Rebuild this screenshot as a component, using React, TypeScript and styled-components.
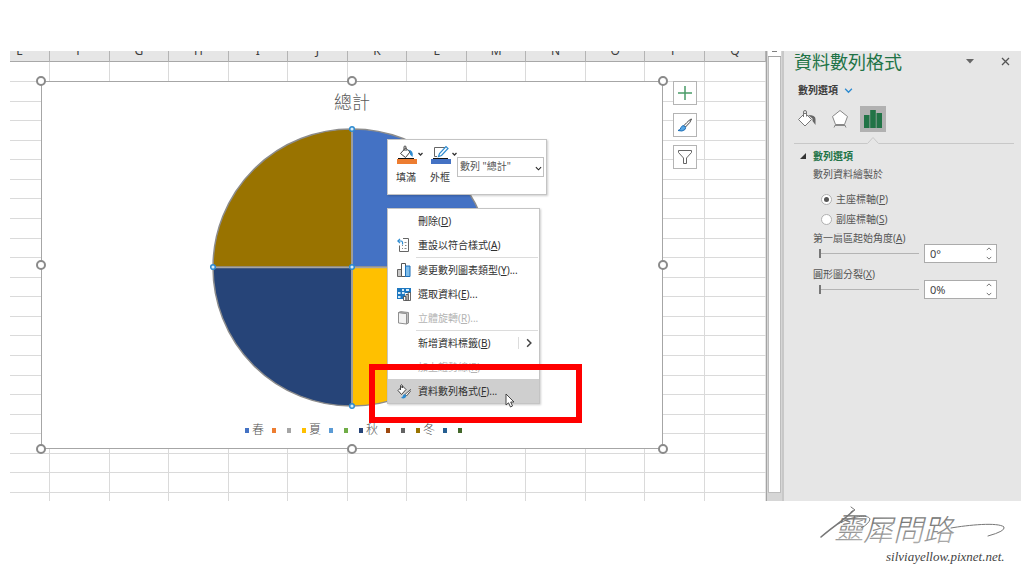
import React, { useState } from "react";
import styled, { createGlobalStyle, css } from "styled-components";

const GlobalStyle = createGlobalStyle`
  *, *::before, *::after { box-sizing: border-box; }
  body { margin: 0; background: #fff; }
  body, button, input, select {
    font-family: "Noto Sans", "Noto Sans CJK TC", sans-serif;
    font-size: 10px;
    color: #3c3c3c;
  }
  button { padding: 0; border: 0; background: none; }
  svg { display: block; flex: none; }
`;

const Page = styled.div`
  min-height: 100vh;
  display: flex;
  flex-direction: column;
  padding: 51px 3px 0 10px;
`;

const Workspace = styled.main`
  flex: 1;
  display: flex;
  min-height: 450px;
`;

/* ---------- worksheet ---------- */

const Sheet = styled.section`
  position: relative;
  flex: 1;
  min-width: 0;
  overflow: hidden;
`;

const Columns = styled.div`
  height: 100%;
  display: grid;
  grid-template-columns: 40px repeat(11, 1fr) 61px;
`;

const Column = styled.div`
  border-right: 1px solid #dadada;
  &:last-child { border-right-color: #e4e4e4; }
`;

const ColumnHeader = styled.div<{ $cut?: boolean }>`
  height: 11px;
  margin-right: -1px;
  overflow: hidden;
  display: flex;
  justify-content: center;
  align-items: flex-end;
  padding: 0 ${(p) => (p.$cut ? 20 : 0)}px 2px 0;
  background: #e6e6e6;
  border-bottom: 1px solid #a8a8a8;
  border-right: 1px solid #b4b4b4;
  font-size: 12px;
  line-height: 16px;
`;

const Rows = styled.div`
  position: absolute;
  inset: 11px 0 0 0;
  display: grid;
  grid-template-rows: 20px repeat(21, 1fr) 8px;
`;

const RowLine = styled.div`
  border-bottom: 1px solid #dadada;
  &:last-child { border-bottom: 0; }
`;

/* ---------- chart ---------- */

const ChartObject = styled.div`
  position: absolute;
  top: 30px;
  left: 31px;
  right: 103px;
`;

const ChartFrame = styled.figure`
  margin: 0;
  padding: 8px 0 10px;
  display: flex;
  flex-direction: column;
  align-items: center;
  background: #fff;
  border: 1px solid #a6a6a6;
`;

const ChartTitle = styled.figcaption`
  font-size: 18px;
  line-height: 24px;
  font-weight: 300;
  color: #595959;
  margin-bottom: 8px;
`;

const Legend = styled.ul`
  list-style: none;
  margin: 10px 0 0;
  padding: 0 0 0 6px;
  height: 16px;
  display: flex;
  align-items: center;
  gap: 8px;
  font-size: 12px;
  line-height: 16px;
  font-weight: 300;
  color: #505050;
`;

const LegendItem = styled.li`
  display: flex;
  align-items: center;
  gap: 3px;
`;

const Swatch = styled.span<{ $color: string }>`
  width: 4px;
  height: 5px;
  background: ${(p) => p.$color};
`;

const Handle = styled.span<{ $x: number; $y: number }>`
  position: absolute;
  left: ${(p) => p.$x}%;
  top: ${(p) => p.$y}%;
  width: 10px;
  height: 10px;
  margin: -5px;
  border: 2px solid #8a8a8a;
  border-radius: 50%;
  background: #fff;
`;

const SideButtons = styled.div`
  position: absolute;
  top: 0;
  left: calc(100% + 10px);
  display: flex;
  flex-direction: column;
  gap: 8px;
`;

const SideButton = styled.button`
  width: 24px;
  height: 24px;
  display: grid;
  place-items: center;
  background: #fff;
  border: 1px solid #b4b4b4;
`;

/* ---------- floating toolbar and menu ---------- */

const floating = css`
  position: absolute;
  left: calc(50% + 35px);
  background: #fff;
  border: 1px solid #c4c4c4;
  box-shadow: 1px 1px 2px rgba(0, 0, 0, 0.2);
`;

const MiniToolbar = styled.div`
  ${floating}
  top: 58px;
  width: 160px;
  height: 56px;
  padding: 5px 2px 0 8px;
  display: flex;
`;

const ToolButton = styled.button`
  width: 34px;
  flex: none;
  display: flex;
  flex-direction: column;
  align-items: flex-start;
  gap: 4px;
  line-height: 16px;
`;

const SelectBox = styled.div`
  position: relative;
  flex: none;
  margin: 12px 0 0 -7px;
  width: 87px;
  height: 20px;
  svg { position: absolute; right: 2px; top: 8px; pointer-events: none; }
`;

const SeriesSelect = styled.select`
  appearance: none;
  width: 100%;
  height: 100%;
  padding: 0 0 3px 2px;
  border: 1px solid #c0c0c0;
  border-radius: 0;
  background: #fff;
  color: #555;
`;

const ContextMenu = styled.div`
  ${floating}
  top: 127px;
  width: 153px;
`;

const MenuItem = styled.button<{ $active?: boolean }>`
  width: 100%;
  height: 24px;
  display: grid;
  grid-template-columns: 30px 1fr 21px;
  align-items: center;
  text-align: left;
  line-height: 16px;
  white-space: nowrap;
  background: ${(p) => (p.$active ? "#cfcfcf" : "transparent")};
  color: #303030;
  &:disabled { color: #b4b4b4; }
`;

const MenuIcon = styled.span`
  padding-left: 9px;
`;

const Submenu = styled.span`
  height: 12px;
  padding-left: 5px;
  display: flex;
  align-items: center;
  border-left: 1px solid #dcdcdc;
`;

const Divider = styled.hr`
  height: 1px;
  margin: 0 1px 0 28px;
  border: 0;
  background: #dcdcdc;
`;

const Cursor = styled.svg`
  position: absolute;
  left: calc(50% + 153px);
  top: 312px;
`;

const Highlight = styled.div`
  position: absolute;
  left: calc(50% + 17px);
  top: 283px;
  width: 213px;
  height: 59px;
  border: 6px solid #f00;
  pointer-events: none;
`;

/* ---------- scroll bar ---------- */

const ScrollBar = styled.div`
  width: 18px;
  flex: none;
  display: flex;
  flex-direction: column;
  background: #d6d6d6;
  border-left: 1px solid #a4a4a4;
  border-right: 2px solid #c8c8c8;
`;

const ScrollCap = styled.div`
  height: 6px;
  padding: 0 4px;
  margin: 0 1px;
  background: #fff;
  border-bottom: 1px solid #a4a4a4;
  &::before { content: ""; display: block; height: 1px; background: #808080; }
`;

const ScrollThumb = styled.div`
  flex: 1;
  margin: 0 1px 8px;
  background: #fff;
  border: 1px solid #bdbdbd;
  border-top: 0;
`;

/* ---------- format panel ---------- */

const Panel = styled.aside`
  width: 237px;
  flex: none;
  padding: 0 7px 0 10px;
  background: #e6e6e6;
`;

const PanelHeader = styled.header`
  display: flex;
  align-items: center;
  height: 21px;
  gap: 27px;
  padding-right: 4px;
`;

const PanelTitle = styled.h1`
  flex: 1;
  margin: 0;
  font-size: 18px;
  line-height: 20px;
  font-weight: 400;
  color: #217346;
`;

const OptionsToggle = styled.button`
  display: flex;
  align-items: center;
  gap: 6px;
  margin: 10px 0 0 4px;
  font-weight: 700;
  line-height: 16px;
`;

const IconTabs = styled.div`
  display: flex;
  gap: 7px;
  margin-top: 8px;
`;

const IconTab = styled.button<{ $active?: boolean }>`
  width: 26px;
  height: 26px;
  display: grid;
  place-items: center;
  background: ${(p) => (p.$active ? "#b1b1b1" : "transparent")};
`;

const TabRule = styled.div`
  height: 12px;
  display: flex;
  align-items: flex-end;
  &::before, &::after { content: ""; height: 1px; background: #c8c8c8; }
  &::before { width: 73px; }
  &::after { flex: 1; }
`;

const SectionToggle = styled.button`
  display: flex;
  align-items: center;
  gap: 7px;
  margin: 4px 0 0 6px;
  font-weight: 700;
  line-height: 16px;
  color: #217346;
`;

const Section = styled.div`
  padding-left: 19px;
  color: #555;
`;

const Group = styled.fieldset`
  margin: 2px 0 1px;
  padding: 0;
  border: 0;
  line-height: 16px;
`;

const GroupTitle = styled.legend`
  padding: 0;
  margin-bottom: 7px;
`;

const RadioLabel = styled.label`
  display: flex;
  align-items: center;
  gap: 4px;
  height: 20px;
  padding-left: 8px;
`;

const Radio = styled.input`
  appearance: none;
  width: 11px;
  height: 11px;
  margin: 0;
  display: grid;
  place-items: center;
  border: 1px solid #b0b0b0;
  border-radius: 50%;
  background: #fff;
  &:checked::before {
    content: "";
    width: 5px;
    height: 5px;
    border-radius: 50%;
    background: #555;
  }
`;

const Field = styled.div`
  height: 36px;
  line-height: 16px;
`;

const FieldLabel = styled.label`
  display: block;
  height: 14px;
`;

const FieldRow = styled.div`
  display: flex;
  align-items: center;
  gap: 5px;
  padding-left: 6px;
`;

const Slider = styled.input`
  appearance: none;
  width: 100px;
  height: 16px;
  margin: 0;
  background: linear-gradient(#b4b4b4, #b4b4b4) center / 100% 1px no-repeat;
  &::-webkit-slider-thumb {
    appearance: none;
    width: 2px;
    height: 9px;
    background: #777;
  }
`;

const SpinBox = styled.div`
  width: 73px;
  height: 19px;
  display: flex;
  background: #fff;
  border: 1px solid #ababab;
`;

const SpinInput = styled.input`
  flex: 1;
  min-width: 0;
  padding: 0 0 0 5px;
  border: 0;
  background: none;
  font-size: 11px;
  color: #444;
`;

const SpinButtons = styled.div`
  width: 14px;
  display: grid;
`;

const SpinButton = styled.button`
  display: grid;
  place-items: center;
`;

/* ---------- footer ---------- */

const Footer = styled.footer`
  height: 75px;
  display: flex;
  justify-content: flex-end;
  padding-right: 7px;
`;

/* ---------- drawings ---------- */

const Chevron = ({ w = 6, color = "#444", dir = "down" }: { w?: number; color?: string; dir?: "down" | "up" | "right" }) => {
  const turn = { down: 0, up: 180, right: -90 }[dir];
  return (
    <svg width={w} height={w} viewBox="0 0 8 8">
      <path d="M1 2.5 4 5.5 7 2.5" fill="none" stroke={color} strokeWidth="1.2" transform={`rotate(${turn} 4 4)`} />
    </svg>
  );
};

const FillIcon = () => (
  <svg width="28" height="20" viewBox="0 0 28 20">
    <path d="M9.5 3 4.5 8.5 9.5 12.5 14 7Z" fill="#fff" stroke="#444" />
    <path d="M8 6V2Q8 1 9 1T10 2V6" fill="none" stroke="#444" />
    <path d="M12 4.5Q18 5 16.5 12L14 9.5V6.5Z" fill="#2e8bd0" />
    <path d="M2 13.5H18" stroke="#111" />
    <path d="M1 14H21V19H1Z" fill="#ed7d31" />
    <path d="M22.5 8 24.5 10 26.5 8" fill="none" stroke="#333" strokeWidth="1.3" />
  </svg>
);

const OutlineIcon = () => (
  <svg width="28" height="20" viewBox="0 0 28 20">
    <path d="M15 2.5H4.5V11.5H7" fill="none" stroke="#666" />
    <path d="M8.5 11.5 9.5 8.5 16 1.5 18 3.5 11.5 10.5Z" fill="#fff" stroke="#2e8bd0" strokeWidth="1.2" />
    <path d="M3 13.5H18" stroke="#111" />
    <path d="M1 14H21V19H1Z" fill="#4472c4" />
    <path d="M22.5 8 24.5 10 26.5 8" fill="none" stroke="#333" strokeWidth="1.3" />
  </svg>
);

const menuIcons: Record<string, React.ReactNode> = {
  reset: (
    <svg width="14" height="14" viewBox="0 0 14 14" fill="none">
      <path d="M6 .5H11.5V13.5H2.5V7.5" stroke="#666" />
      <path d="M7.5 4.5H9.5M5 7.5H6M8 7.5H9.5M5 10.5H6M7.5 10.5H9.5" stroke="#888" />
      <path d="M1 3H4Q6 3 5.5 6.5M3 .8 .8 3 3 5.2" stroke="#2e8bd0" strokeWidth="1.2" />
    </svg>
  ),
  chartType: (
    <svg width="14" height="14" viewBox="0 0 14 14">
      <path d="M.5 6.5H4.5V13.5H.5Z" fill="#c8c8c8" stroke="#666" />
      <path d="M4.5 .5H8.5V13.5H4.5Z" fill="#fff" stroke="#555" />
      <path d="M8.5 3H13V13.5H8.5Z" fill="#7fbdea" stroke="#1e6fb8" />
    </svg>
  ),
  selectData: (
    <svg width="14" height="14" viewBox="0 0 14 14">
      <path d="M0 1H14V6H8V12H0Z" fill="#1e78c0" />
      <path d="M1 5H3.500V7H1ZM5 2H7V4H5ZM5 5H7.500V7H5ZM9 2H12V4H9ZM1 9H3.500V11H1Z" fill="#d5ebfa" />
      <path d="M6.5 9.5H9V13.5H6.5ZM9 7.5H11.2V13.5H9ZM11.2 5.5H13.5V13.5H11.2Z" fill="#fff" stroke="#444" strokeWidth=".8" />
    </svg>
  ),
  rotate: (
    <svg width="14" height="14" viewBox="0 0 14 14" stroke="#909090">
      <path d="M1.5 1.5 9.5 2.5V13L1.5 12Z" fill="#f2f2f2" />
      <path d="M1.5 1.5 3.5 .6 11.5 1.5V12L9.5 13V2.5Z" fill="#c0c0c0" />
    </svg>
  ),
  format: (
    <svg width="14" height="15" viewBox="0 0 14 15">
      <path d="M5.5 2 1 6.5 4.5 10.5 9 5.5Z" fill="#fff" stroke="#444" />
      <path d="M3.5 6V1.5Q4.5-.2 5.5 1.5V4" fill="none" stroke="#444" />
      <path d="M13.5 5.5 8 10.5 9.5 12 14 6.5Z" fill="#fff" stroke="#444" strokeWidth=".9" />
      <path d="M4 13.8Q6 13 6 11.5 7.5 9.5 9 11 10 12.5 8 14 6 15 4 13.8Z" fill="#2e8bd0" />
    </svg>
  ),
};

const Pie = () => (
  <svg width="290" height="290" viewBox="0 0 290 290" role="img" aria-label="總計">
    <g stroke="#8c8c8c" strokeWidth="1.5">
      <path d="M145 145V7A138.5 138.5 0 0 1 284 145Z" fill="#4472c4" />
      <path d="M145 145H284A138.5 138.5 0 0 1 145 284Z" fill="#ffc000" />
      <path d="M145 145V284A138.5 138.5 0 0 1 6 145Z" fill="#264478" />
      <path d="M145 145H6A138.5 138.5 0 0 1 145 7Z" fill="#997300" />
    </g>
    <path d="M145 7V284M6 145.5H284" stroke="#a5a5a5" strokeWidth="1.5" />
    <g fill="#d8ecfa" stroke="#2e8bd0" strokeWidth="1.5">
      {[[145, 7], [6, 145], [145, 145], [145, 284], [284, 145]].map(([x, y]) => (
        <circle key={`${x}-${y}`} cx={x} cy={y} r="2.3" />
      ))}
    </g>
  </svg>
);

const Signature = () => (
  <svg width="200" height="72" viewBox="0 0 200 72" role="img" aria-label="靈犀問路">
    <defs>
      <linearGradient id="ink" x1="0" y1="0" x2="0.3" y2="1">
        <stop offset="0" stopColor="#555" />
        <stop offset="0.5" stopColor="#808080" />
        <stop offset="1" stopColor="#b0b0b0" />
      </linearGradient>
    </defs>
    <g fontFamily="'Noto Sans CJK TC', sans-serif" fontWeight="300" fontStyle="italic" fill="url(#ink)">
      <text x="20" y="38" fontSize="30">靈</text>
      <text x="49" y="40" fontSize="30">犀</text>
      <text x="79" y="40" fontSize="30">問</text>
      <text x="109" y="40" fontSize="30">路</text>
    </g>
    <g fill="none" stroke="#777" strokeLinecap="round">
      <path d="M7 36C18 26 29 20 39 10" strokeWidth="1.6" />
      <path d="M37 6 41 9 37 11M24 23C38 15 54 13 56 18Q55 23 47 27" />
      <path d="M137 27C154 24 184 21 190 26Q192 30 174 35" />
    </g>
    <text x="72" y="60" fontFamily="'Liberation Serif', serif" fontStyle="italic" fontSize="13" fill="#444">
      silviayellow.pixnet.net.
    </text>
  </svg>
);

/* ---------- content ---------- */

const letters = ["E", "F", "G", "H", "I", "J", "K", "L", "M", "N", "O", "P", "Q"];

const legend: [string, string][] = [
  ["#4472c4", "春"], ["#ed7d31", ""], ["#a5a5a5", ""],
  ["#ffc000", "夏"], ["#5b9bd5", ""], ["#70ad47", ""],
  ["#264478", "秋"], ["#9e480e", ""], ["#636363", ""],
  ["#997300", "冬"], ["#255e91", ""], ["#43682b", ""],
];

const handles = [[0, 0], [50, 0], [100, 0], [0, 50], [100, 50], [0, 100], [50, 100], [100, 100]];

type Entry = { text: string; keyName: string; more?: boolean; icon?: string; disabled?: boolean; submenu?: boolean; active?: boolean };

const menu: Entry[][] = [
  [
    { text: "刪除", keyName: "D" },
    { text: "重設以符合樣式", keyName: "A", icon: "reset" },
  ],
  [
    { text: "變更數列圖表類型", keyName: "Y", more: true, icon: "chartType" },
    { text: "選取資料", keyName: "E", more: true, icon: "selectData" },
    { text: "立體旋轉", keyName: "R", more: true, icon: "rotate", disabled: true },
  ],
  [
    { text: "新增資料標籤", keyName: "B", submenu: true },
    { text: "加上趨勢線", keyName: "R", disabled: true },
    { text: "資料數列格式", keyName: "F", more: true, icon: "format", active: true },
  ],
];

const Mnemonic = ({ text, k, more }: { text: string; k: string; more?: boolean }) => (
  <span>{text}(<u>{k}</u>){more && "..."}</span>
);

const SliderField = ({ id, text, k, unit }: { id: string; text: string; k: string; unit: string }) => {
  const [value, setValue] = useState(0);
  return (
    <Field>
      <FieldLabel htmlFor={id}><Mnemonic text={text} k={k} /></FieldLabel>
      <FieldRow>
        <Slider id={id} type="range" min={0} max={360} value={value} onChange={(e) => setValue(+e.target.value)} />
        <SpinBox>
          <SpinInput aria-label={text} value={`${value}${unit}`} onChange={(e) => setValue(parseInt(e.target.value) || 0)} />
          <SpinButtons>
            <SpinButton aria-label="增加" onClick={() => setValue(value + 1)}><Chevron dir="up" color="#666" /></SpinButton>
            <SpinButton aria-label="減少" onClick={() => setValue(Math.max(0, value - 1))}><Chevron color="#666" /></SpinButton>
          </SpinButtons>
        </SpinBox>
      </FieldRow>
    </Field>
  );
};

export default function App() {
  return (
    <Page lang="zh-Hant">
      <GlobalStyle />
      <Workspace>
        <Sheet>
          <Columns>
            {letters.map((l, i) => (
              <Column key={l}><ColumnHeader $cut={i === 0}>{l}</ColumnHeader></Column>
            ))}
          </Columns>
          <Rows>
            {Array.from({ length: 23 }, (_, i) => <RowLine key={i} />)}
          </Rows>

          <ChartObject>
            <ChartFrame>
              <ChartTitle>總計</ChartTitle>
              <Pie />
              <Legend>
                {legend.map(([color, name]) => (
                  <LegendItem key={color}><Swatch $color={color} /><span>{name}</span></LegendItem>
                ))}
              </Legend>
            </ChartFrame>
            {handles.map(([x, y]) => <Handle key={`${x}-${y}`} $x={x} $y={y} />)}

            <SideButtons>
              <SideButton aria-label="圖表項目">
                <svg width="16" height="16" viewBox="0 0 16 16"><path d="M8 1V15M1 8H15" stroke="#4a9c68" strokeWidth="1.5" /></svg>
              </SideButton>
              <SideButton aria-label="圖表樣式">
                <svg width="16" height="16" viewBox="0 0 16 16">
                  <path d="M14.5 2Q13 2 7 8.5L8.5 10Q14 5 14.5 2Z" fill="#fff" stroke="#444" />
                  <path d="M1 13.5Q3.5 13 4 10.5 5.5 7.5 7.5 9 9.5 10.5 8 12.5 5.5 15 1 13.5Z" fill="#5aa9e6" stroke="#1e6fb8" />
                </svg>
              </SideButton>
              <SideButton aria-label="圖表篩選">
                <svg width="16" height="16" viewBox="0 0 16 16"><path d="M1.5 1.5H14.5V3.5L9.5 9V14.5H6.5V9L1.5 3.5Z" fill="#fff" stroke="#666" /></svg>
              </SideButton>
            </SideButtons>

            <MiniToolbar>
              <ToolButton><FillIcon />填滿</ToolButton>
              <ToolButton><OutlineIcon />外框</ToolButton>
              <SelectBox>
                <SeriesSelect aria-label="圖表項目"><option>數列 "總計"</option></SeriesSelect>
                <Chevron w={7} color="#222" />
              </SelectBox>
            </MiniToolbar>

            <ContextMenu role="menu">
              {menu.map((group, g) => (
                <React.Fragment key={g}>
                  {g > 0 && <Divider />}
                  {group.map((m) => (
                    <MenuItem key={m.text} role="menuitem" disabled={m.disabled} $active={m.active}>
                      <MenuIcon>{m.icon && menuIcons[m.icon]}</MenuIcon>
                      <Mnemonic text={m.text} k={m.keyName} more={m.more} />
                      {m.submenu && <Submenu><Chevron dir="right" w={10} /></Submenu>}
                    </MenuItem>
                  ))}
                </React.Fragment>
              ))}
            </ContextMenu>
            <Highlight />
            <Cursor width="10" height="15" viewBox="0 0 10 15">
              <path d="M1 1V12L3.5 9.8 5.5 14 7.5 13 5.7 9H9Z" fill="#fff" stroke="#333" strokeWidth=".9" />
            </Cursor>
          </ChartObject>
        </Sheet>

        <ScrollBar>
          <ScrollCap />
          <ScrollThumb />
        </ScrollBar>

        <Panel>
          <PanelHeader>
            <PanelTitle>資料數列格式</PanelTitle>
            <button aria-label="工作窗格選項">
              <svg width="8" height="5" viewBox="0 0 8 5"><path d="M0 0H8L4 4.5Z" fill="#666" /></svg>
            </button>
            <button aria-label="關閉">
              <svg width="9" height="9" viewBox="0 0 9 9"><path d="M1 1 8 8M8 1 1 8" stroke="#555" strokeWidth="1.3" /></svg>
            </button>
          </PanelHeader>
          <OptionsToggle>數列選項<Chevron w={9} color="#2e8bd0" /></OptionsToggle>
          <IconTabs>
            <IconTab aria-label="填滿與線條">
              <svg width="20" height="20" viewBox="0 0 20 20">
                <path d="M8 4 1.5 10.5 8 17 14.5 10.5Z" fill="#fff" stroke="#777" />
                <path d="M6.5 8V3Q6.5 1.5 8 1.5T9.5 3V7.5" fill="none" stroke="#777" />
                <path d="M11 6Q18.5 6 18.5 10V16L15.5 12V9.5Z" fill="#666" />
              </svg>
            </IconTab>
            <IconTab aria-label="效果">
              <svg width="18" height="20" viewBox="0 0 18 20">
                <path d="M9 1.5 16.5 7.5 13.5 15.5H4.5L1.5 7.5Z" fill="#fff" stroke="#888" />
                <path d="M4 16.5H14M4.5 15.5 3 18.5M13.5 15.5 15 18.5" fill="none" stroke="#888" />
              </svg>
            </IconTab>
            <IconTab aria-label="數列選項" $active>
              <svg width="18" height="18" viewBox="0 0 18 18">
                <path d="M0 5H5.5V18H0ZM6.2 0H11.8V18H6.2ZM12.5 3H18V18H12.5Z" fill="#217346" />
              </svg>
            </IconTab>
          </IconTabs>
          <TabRule>
            <svg width="12" height="8" viewBox="0 0 12 8"><path d="M0 7.5H.5L6 1.5 11.5 7.5H12" fill="none" stroke="#c8c8c8" /></svg>
          </TabRule>
          <SectionToggle>
            <svg width="6" height="6" viewBox="0 0 6 6"><path d="M6 0V6H0Z" fill="#333" /></svg>
            數列選項
          </SectionToggle>
          <Section>
            <Group>
              <GroupTitle>數列資料繪製於</GroupTitle>
              <RadioLabel><Radio type="radio" name="axis" defaultChecked /><Mnemonic text="主座標軸" k="P" /></RadioLabel>
              <RadioLabel><Radio type="radio" name="axis" /><Mnemonic text="副座標軸" k="S" /></RadioLabel>
            </Group>
            <SliderField id="angle" text="第一扇區起始角度" k="A" unit="°" />
            <SliderField id="explode" text="圓形圖分裂" k="X" unit="%" />
          </Section>
        </Panel>
      </Workspace>
      <Footer><Signature /></Footer>
    </Page>
  );
}
